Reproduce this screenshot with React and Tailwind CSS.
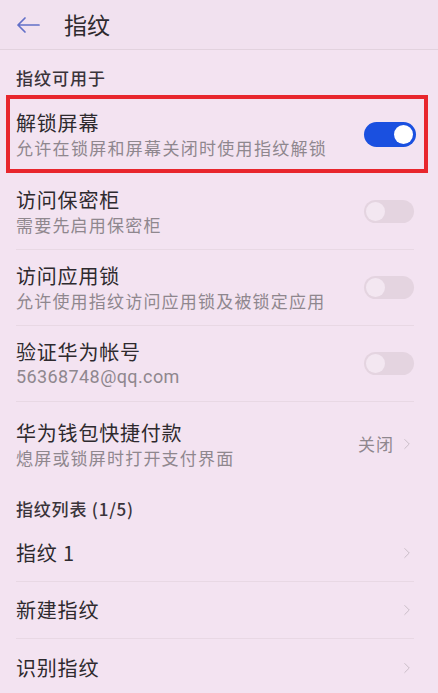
import { ChevronRight } from "lucide-react";

const FONT = { fontFamily: '"Noto Sans CJK SC", "Noto Sans", sans-serif' };

function Toggle({ on }) {
  return on ? (
    <div className="w-[52px] h-[25px] rounded-full bg-[#1a50e0] flex items-center justify-end px-[3px]">
      <div className="w-[19px] h-[19px] rounded-full bg-white" />
    </div>
  ) : (
    <div className="w-[50px] h-[23px] rounded-full bg-[#e4d4e0] flex items-center px-[2px]">
      <div className="w-[19px] h-[19px] rounded-full bg-[#f3e7f1]" />
    </div>
  );
}

function Row({ title, sub, right, divider = true, h, mono }) {
  return (
    <div className={`flex items-center pl-4 pr-[24px] ${h}`}>
      <div className={`flex-1 h-full flex items-center ${divider ? "border-b border-[#e8d8e4]" : ""}`}>
        <div className="flex-1">
          <div className="text-[20px] leading-[26px] tracking-[0.8px] text-[#2e2a2e]">{title}</div>
          {sub && (
            <div
              className={`leading-[22px] text-[#8f878e] mt-[1px] ${mono ? "text-[18px] tracking-[0.4px]" : "text-[17px] tracking-[1.2px]"}`}
              style={mono ? { fontFamily: "Roboto, sans-serif" } : undefined}
            >
              {sub}
            </div>
          )}
        </div>
        {right}
      </div>
    </div>
  );
}

const Chevron = () => <ChevronRight size={18} strokeWidth={1.3} className="text-[#c9bcc6] -mr-[2px]" />;

export default function App() {
  return (
    <div className="w-[438px] h-[693px] overflow-hidden bg-[#f3e3f1]" style={FONT}>
      {/* header */}
      <div className="h-[50px] flex items-center border-b border-[#e2d2de] bg-[#f1e1ef]">
        <svg width="26" height="20" viewBox="0 0 26 20" className="ml-[15px]" fill="none" stroke="#6270c8" strokeWidth="1.7" strokeLinecap="round" strokeLinejoin="round">
          <path d="M24 10H3M10 3L3 10l7 7" />
        </svg>
        <span className="ml-[23px] text-[23px] text-[#2e2a2e]">指纹</span>
      </div>

      <div className="h-[45px] flex items-center pt-[10px] pl-4 text-[17px] tracking-[1px] text-[#3a343a] font-medium">指纹可用于</div>

      {/* highlighted item */}
      <div className="ml-[6px] mr-[10px] border-[4px] border-[#e8262d] h-[78px] flex items-center pl-[6px] pr-[8px]">
        <div className="flex-1">
          <div className="text-[20px] leading-[26px] tracking-[0.8px] text-[#2e2a2e]">解锁屏幕</div>
          <div className="text-[17px] leading-[22px] tracking-[1.3px] text-[#8f878e] mt-[1px]">允许在锁屏和屏幕关闭时使用指纹解锁</div>
        </div>
        <Toggle on />
      </div>

      <Row h="h-[77px]" title="访问保密柜" sub="需要先启用保密柜" right={<Toggle />} />
      <Row h="h-[76px]" title="访问应用锁" sub="允许使用指纹访问应用锁及被锁定应用" right={<Toggle />} />
      <Row h="h-[76px]" title="验证华为帐号" sub="56368748@qq.com" mono right={<Toggle />} />
      <Row
        h="h-[84px]"
        divider={false}
        title="华为钱包快捷付款"
        sub="熄屏或锁屏时打开支付界面"
        right={
          <div className="flex items-center gap-[4px] text-[17px] tracking-[1px] text-[#8f878e]">
            关闭
            <Chevron />
          </div>
        }
      />

      <div className="h-[39px] flex items-center pt-[7px] pl-4 text-[17px] tracking-[0.8px] text-[#3a343a] font-medium">指纹列表 (1/5)</div>

      <Row h="h-[57px]" title="指纹 1" right={<Chevron />} />
      <Row h="h-[57px]" title="新建指纹" right={<Chevron />} />
      <Row h="h-[57px]" divider={false} title="识别指纹" right={<Chevron />} />
    </div>
  );
}
